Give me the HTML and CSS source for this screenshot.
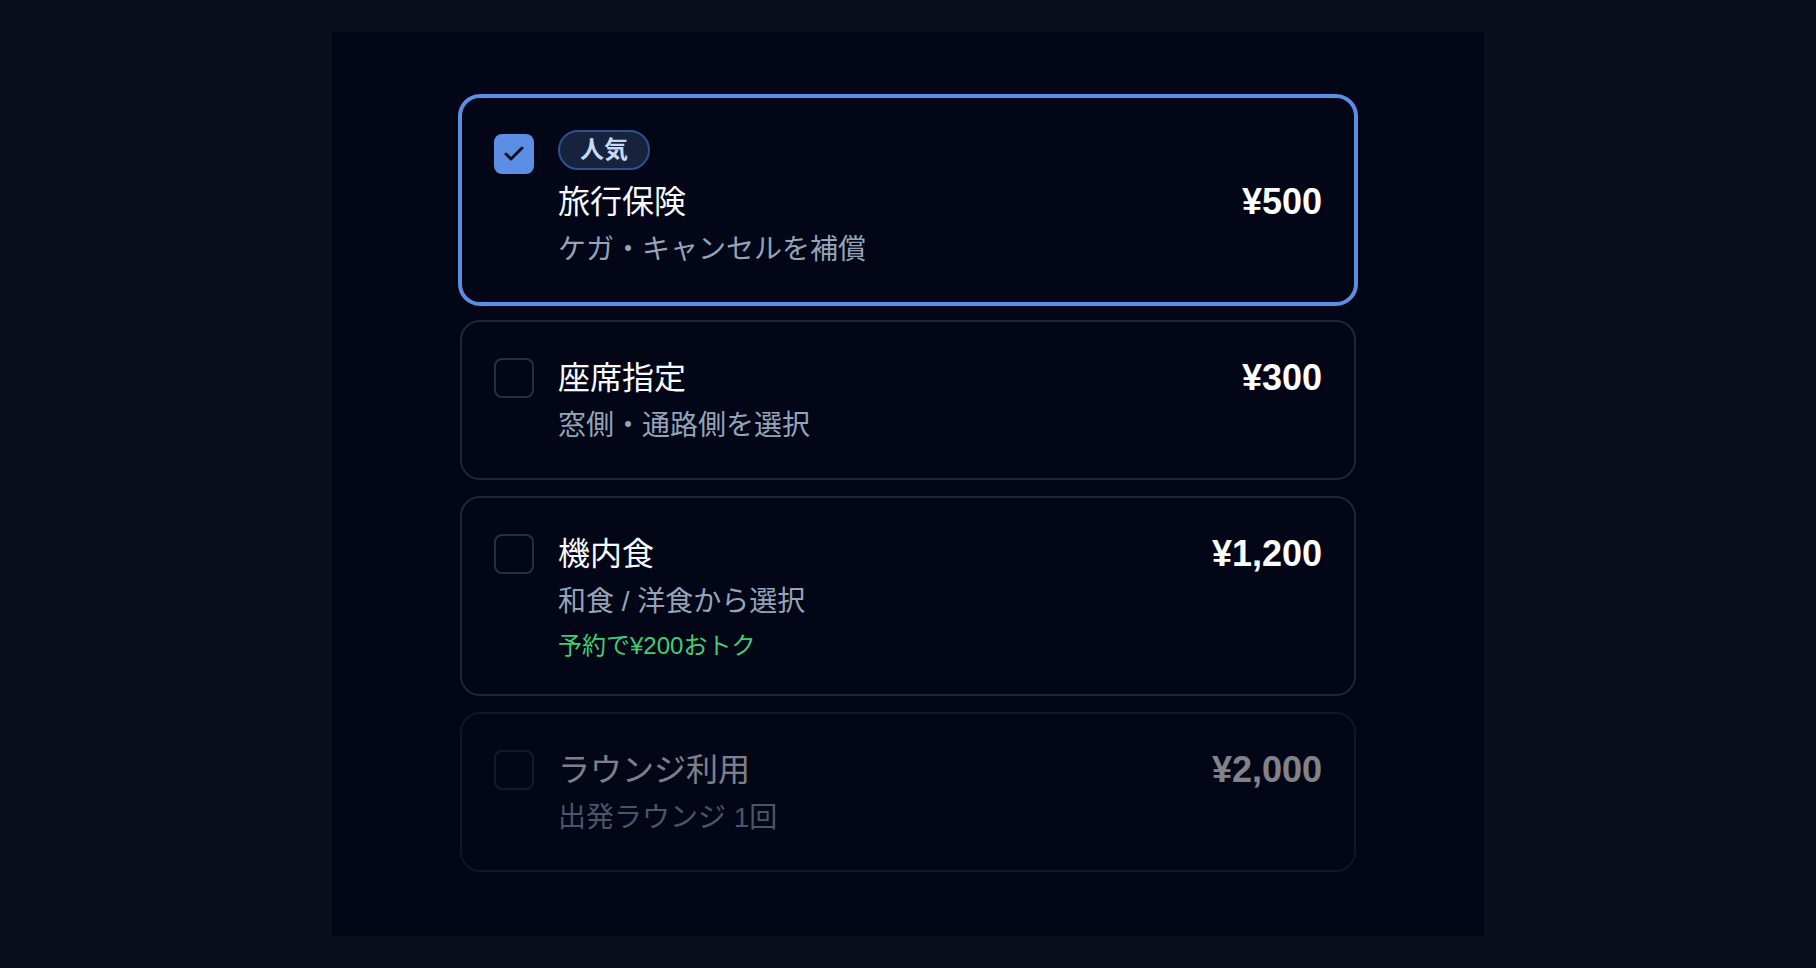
FILE: index.html
```html
<!DOCTYPE html>
<html lang="ja">
<head>
<meta charset="utf-8">
<title>オプション選択</title>
<link rel="stylesheet" href="styles.css">
</head>
<body>
<main class="panel">
  <div class="list">
    <label class="card is-selected">
      <span class="check is-checked">
        <svg viewBox="0 0 24 24" width="24" height="24" aria-hidden="true"><path d="M20 6 9 17l-5-5" fill="none" stroke="#0a1122" stroke-width="3" stroke-linecap="round" stroke-linejoin="round"/></svg>
      </span>
      <div class="body">
        <span class="badge">人気</span>
        <div class="row">
          <span class="title">旅行保険</span>
          <span class="price">¥500</span>
        </div>
        <p class="desc">ケガ・キャンセルを補償</p>
      </div>
    </label>

    <label class="card">
      <span class="check"></span>
      <div class="body">
        <div class="row">
          <span class="title">座席指定</span>
          <span class="price">¥300</span>
        </div>
        <p class="desc">窓側・通路側を選択</p>
      </div>
    </label>

    <label class="card">
      <span class="check"></span>
      <div class="body">
        <div class="row">
          <span class="title">機内食</span>
          <span class="price">¥1,200</span>
        </div>
        <p class="desc">和食 / 洋食から選択</p>
        <p class="deal">予約で¥200おトク</p>
      </div>
    </label>

    <label class="card is-disabled">
      <span class="check"></span>
      <div class="body">
        <div class="row">
          <span class="title">ラウンジ利用</span>
          <span class="price">¥2,000</span>
        </div>
        <p class="desc">出発ラウンジ 1回</p>
      </div>
    </label>
  </div>
</main>
</body>
</html>
```

FILE: styles.css
```css
* { box-sizing: border-box; }

html, body {
  margin: 0;
  height: 100%;
}

body {
  background: #0a0f1d;
  padding: 32px;
  font-family: "Liberation Sans", "Noto Sans CJK JP", sans-serif;
  color: #f1f5f9;
}

.panel {
  max-width: 1152px;
  height: 904px;
  margin: 0 auto;
  background: #020617;
  padding: 64px 0;
}

.list {
  max-width: 896px;
  margin: 0 auto;
  display: flex;
  flex-direction: column;
  gap: 16px;
}

.card {
  display: flex;
  align-items: flex-start;
  gap: 24px;
  padding: 32px;
  border: 2px solid #1e2636;
  border-radius: 20px;
  background: #020617;
  cursor: pointer;
}

.card.is-selected {
  border-color: #5c8fe3;
  box-shadow: 0 0 0 2px #5c8fe3;
}

.card.is-disabled {
  opacity: 0.5;
  cursor: default;
}

.check {
  flex: none;
  width: 40px;
  height: 40px;
  margin-top: 4px;
  border: 2px solid #262f40;
  border-radius: 8px;
  display: flex;
  align-items: center;
  justify-content: center;
}

.check.is-checked {
  background: #5c8fe3;
  border-color: #5c8fe3;
}

.body {
  flex: 1;
  min-width: 0;
  display: flex;
  flex-direction: column;
  align-items: flex-start;
}

.badge {
  display: inline-block;
  padding: 2px 20px;
  margin-bottom: 8px;
  border: 2px solid #2d5190;
  border-radius: 999px;
  background: #17223c;
  color: #c6d9f6;
  font-size: 24px;
  line-height: 32px;
  font-weight: 700;
}

.row {
  align-self: stretch;
  display: flex;
  align-items: center;
  justify-content: space-between;
  gap: 16px;
}

.title {
  font-size: 32px;
  line-height: 48px;
  font-weight: 400;
  color: #f8fafc;
}

.price {
  font-size: 36px;
  line-height: 48px;
  font-weight: 700;
  color: #ffffff;
}

.desc {
  margin: 4px 0 0;
  font-size: 28px;
  line-height: 40px;
  color: #94a3b8;
}

.deal {
  margin: 8px 0 0;
  font-size: 24px;
  line-height: 32px;
  color: #3fcf72;
}
```
